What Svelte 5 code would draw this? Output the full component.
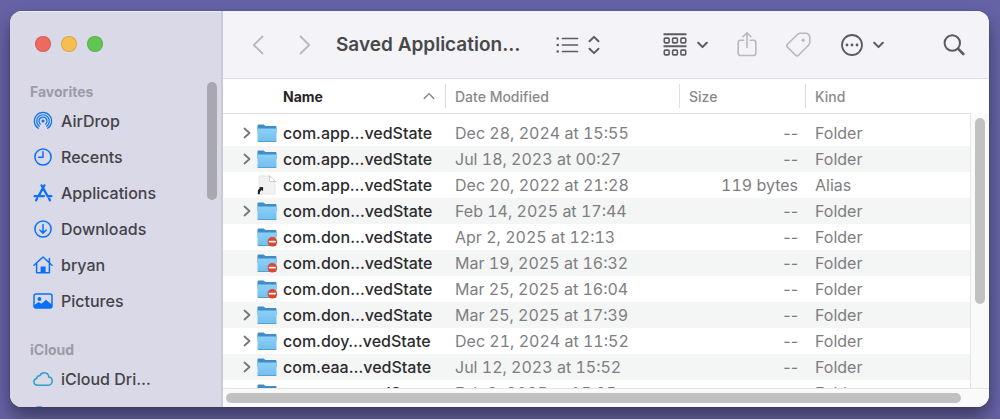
<script>
    const favorites = [
        { name: "AirDrop", icon: "airdrop" },
        { name: "Recents", icon: "clock" },
        { name: "Applications", icon: "apps" },
        { name: "Downloads", icon: "download" },
        { name: "bryan", icon: "home" },
        { name: "Pictures", icon: "picture" },
    ];

    const files = [
        { name: "com.app…vedState", date: "Dec 28, 2024 at 15:55", type: "folder" },
        { name: "com.app…vedState", date: "Jul 18, 2023 at 00:27", type: "folder" },
        { name: "com.app…vedState", date: "Dec 20, 2022 at 21:28", type: "alias", size: "119 bytes" },
        { name: "com.don…vedState", date: "Feb 14, 2025 at 17:44", type: "folder" },
        { name: "com.don…vedState", date: "Apr 2, 2025 at 12:13", type: "locked" },
        { name: "com.don…vedState", date: "Mar 19, 2025 at 16:32", type: "locked" },
        { name: "com.don…vedState", date: "Mar 25, 2025 at 16:04", type: "locked" },
        { name: "com.don…vedState", date: "Mar 25, 2025 at 17:39", type: "folder" },
        { name: "com.doy…vedState", date: "Dec 21, 2024 at 11:52", type: "folder" },
        { name: "com.eaa…vedState", date: "Jul 12, 2023 at 15:52", type: "folder" },
        { name: "com.exa…vedState", date: "Feb 9, 2025 at 15:05", type: "locked" },
    ];
</script>

{#snippet sideIcon(icon)}
    <svg class="side-icon" class:teal={icon === "cloud" || icon === "shared"} viewBox="0 0 20 20" aria-hidden="true">
        {#if icon === "airdrop"}
            <g stroke-width="1.2">
                <path d="M5.4 17.3a8.6 8.6 0 1 1 9.2 0" />
                <path d="M6.4 15.2a6.3 6.3 0 1 1 7.2 0" />
                <path d="M7.3 13a4 4 0 1 1 5.4 0" />
            </g>
            <circle class="solid" cx="10" cy="10" r="1.5" />
        {:else if icon === "clock"}
            <circle cx="10" cy="10" r="8.1" />
            <path d="M10 4.8V10.2H5.6" />
        {:else if icon === "apps"}
            <path stroke-width="2.2" d="M8.5 2.3 14.9 13.6M16 15.6l1 1.8M11.5 2.3 5.8 12.6M4.2 15.3 3 17.4M1.6 13.2h9.3M14.6 13.2h3.8" />
        {:else if icon === "download"}
            <circle cx="10" cy="10" r="8.1" />
            <path d="M10 5.4v8.6M6.8 11l3.2 3.2L13.2 11" />
        {:else if icon === "home"}
            <path d="M1 10.2 10 2l9 8.2M3.6 8.4v9.4h12.8V8.4M16.4 3.4v4" />
            <path class="solid" d="M7.6 11.6h5v6h-5z" />
        {:else if icon === "picture"}
            <rect x="1" y="3" width="18" height="14" rx="2" />
            <circle class="solid" cx="6.4" cy="8" r="1.9" />
            <path class="solid" d="M1 14.2 5.6 11l2.8 1.8L13 8.8l6 5V17H1z" />
        {:else if icon === "cloud"}
            <path d="M5 16.2C2.6 16.2.9 14.7.9 12.7c0-1.8 1.3-3 2.9-3.2-.1-1.7 1.3-3 3-2.7C7.7 4.8 9.3 3.7 11.3 3.8c2.5.1 4.3 1.9 4.5 4.3 2 .3 3.4 2 3.4 4 0 2.3-1.7 4.1-4 4.1z" />
        {:else}
            <path class="solid" d="M3 2.8a1.5 1.5 0 0 1 1.5-1.5h4l2 2h7v13H3z" />
        {/if}
    </svg>
{/snippet}

{#snippet fileIcon(type)}
    <svg class="file-icon" viewBox="0 0 20 20" aria-hidden="true">
        {#if type === "alias"}
            <path d="M2.5 1H13l5 5V19H2.5z" fill="#f2f2f3" stroke="#e4e4e5" stroke-width="1" />
            <path d="M12.5 1v5.5H18z" fill="#fff" stroke="#cfcfd0" stroke-width="1" />
            <path d="M.8 19.2V17c0-2 1-3.2 2.2-3.7L1.9 12.2 6.1 12v4.2l-1.2-1.1c-1.2.5-2 1.6-2.2 4.1z" fill="#222" />
        {:else}
            <path d="M.5 2.8c0-.8.5-1.3 1.3-1.3h4.8l1.8 1.5h9.9c.8 0 1.2.5 1.2 1.2V10H.5z" fill="#3f8cc9" />
            <path d="M.5 5.5h19v12c0 .7-.5 1.2-1.2 1.2H1.7c-.7 0-1.2-.5-1.2-1.2z" fill="url(#folder-front)" />
            <path d="M1 18.5h18" stroke="#5a9fcb" stroke-width="1" />
            {#if type === "locked"}
                <circle cx="15.3" cy="14.8" r="4.8" fill="#dc452e" />
                <path d="M12.5 14.6h5.6" stroke="#fff" stroke-width="1.8" />
            {/if}
        {/if}
    </svg>
{/snippet}

{#snippet down()}
    <svg width="11" height="8" viewBox="0 0 11 8" aria-hidden="true"><path stroke-width="2" d="M1.2 1.8 5.5 6.1 9.8 1.8" /></svg>
{/snippet}

<main>
    <div class="window">
        <aside>
            <div class="lights">
                <button class="close" aria-label="Close"></button>
                <button class="minimize" aria-label="Minimize"></button>
                <button class="zoom" aria-label="Zoom"></button>
            </div>
            <nav>
                <h2>Favorites</h2>
                {#each favorites as item}
                    <a href="#{item.icon}">{@render sideIcon(item.icon)}{item.name}</a>
                {/each}
                <h2>iCloud</h2>
                <a href="#cloud">{@render sideIcon("cloud")}iCloud Dri…</a>
                <a href="#shared" aria-label="Shared">{@render sideIcon("shared")}</a>
            </nav>
            <div class="side-thumb"></div>
        </aside>

        <section>
            <header>
                <button class="faded" aria-label="Back">
                    <svg width="12" height="20" viewBox="0 0 12 20"><path stroke-width="1.8" d="M10.5 1.5 1.8 10l8.7 8.5" /></svg>
                </button>
                <button class="faded forward" aria-label="Forward">
                    <svg width="12" height="20" viewBox="0 0 12 20"><path stroke-width="1.8" d="M1.5 1.5 10.2 10l-8.7 8.5" /></svg>
                </button>
                <h1>Saved Application…</h1>
                <button class="view" aria-label="View as list">
                    <svg width="24" height="20" viewBox="0 0 24 20">
                        <path stroke-width="1.7" d="M6.5 3.5h15M6.5 10h15M6.5 16.5h15" />
                        <path stroke-width="2.6" d="M1.7 3.5h.01M1.7 10h.01M1.7 16.5h.01" />
                    </svg>
                    <svg width="12" height="20" viewBox="0 0 12 20"><path stroke-width="2" d="M1.5 6.2 6 1.9l4.5 4.3M1.5 13.8 6 18.1l4.5-4.3" /></svg>
                </button>
                <button class="group" aria-label="Group">
                    <svg width="24" height="24" viewBox="0 0 24 24">
                        <path stroke-width="1.9" stroke-linecap="butt" d="M.5 1.2h23M.5 13.3h23" />
                        <g stroke-width="1.6">
                            <rect x="1.3" y="5.1" width="4.8" height="4.8" rx="1" />
                            <rect x="9.6" y="5.1" width="4.8" height="4.8" rx="1" />
                            <rect x="17.9" y="5.1" width="4.8" height="4.8" rx="1" />
                            <rect x="1.3" y="17.1" width="4.8" height="4.8" rx="1" />
                            <rect x="9.6" y="17.1" width="4.8" height="4.8" rx="1" />
                            <rect x="17.9" y="17.1" width="4.8" height="4.8" rx="1" />
                        </g>
                    </svg>
                    {@render down()}
                </button>
                <button class="faded" aria-label="Share">
                    <svg width="20" height="26" viewBox="0 0 20 26"><path stroke-width="1.6" d="M6.8 8.3H3.5a2.3 2.3 0 0 0-2.3 2.3v10.6a2.3 2.3 0 0 0 2.3 2.3h13a2.3 2.3 0 0 0 2.3-2.3V10.6a2.3 2.3 0 0 0-2.3-2.3h-3.3M10 15.5V1M6 4.7l4-4 4 4" /></svg>
                </button>
                <button class="faded" aria-label="Tags">
                    <svg width="26" height="26" viewBox="0 0 26 26">
                        <path stroke-width="1.6" d="M14.3 1.3h5.2c3.2 0 4.3 1.9 4.3 4.7v4.3c0 1.3-.5 2.2-1.3 3L12.5 23.3c-.9.9-1.9.9-2.8 0L1.4 15.1c-.9-.9-.9-1.9 0-2.8L11.5 2.5c.8-.8 1.6-1.2 2.8-1.2z" />
                        <circle cx="17.2" cy="8.2" r="1.6" fill="currentColor" stroke="none" />
                    </svg>
                </button>
                <button aria-label="More actions">
                    <svg width="22" height="22" viewBox="0 0 22 22">
                        <circle cx="11" cy="11" r="10" stroke-width="1.8" />
                        <path stroke-width="2.8" d="M6 11h.01M11 11h.01M16 11h.01" />
                    </svg>
                    {@render down()}
                </button>
                <button class="search" aria-label="Search">
                    <svg width="22" height="22" viewBox="0 0 22 22">
                        <circle cx="9.3" cy="9" r="7.7" stroke-width="2" />
                        <path stroke-width="2.6" d="M15.2 14.9 20.3 20" />
                    </svg>
                </button>
            </header>

            <div class="content">
                <div class="list">
                    <table>
                        <thead>
                            <tr>
                                <th class="name">
                                    <div>Name <svg width="12" height="8" viewBox="0 0 12 8"><path stroke-width="1.3" d="M1.2 6.5 6 1.6l4.8 4.9" /></svg></div>
                                </th>
                                <th class="date"><div>Date Modified</div></th>
                                <th class="size"><div>Size</div></th>
                                <th class="kind"><div>Kind</div></th>
                            </tr>
                        </thead>
                        <tbody>
                            {#each files as file}
                                <tr>
                                    <td>
                                        <div class="file">
                                            <span class="disclosure">
                                                {#if file.type === "folder"}
                                                    <button aria-label="Expand {file.name}">
                                                        <svg width="8" height="12" viewBox="0 0 8 12"><path stroke-width="1.8" d="M1.5 1.5 6.5 6l-5 4.5" /></svg>
                                                    </button>
                                                {/if}
                                            </span>
                                            {@render fileIcon(file.type)}
                                            <span>{file.name}</span>
                                        </div>
                                    </td>
                                    <td class="digits">{file.date}</td>
                                    <td class="num" class:digits={file.size}>{file.size ?? "--"}</td>
                                    <td>{file.type === "alias" ? "Alias" : "Folder"}</td>
                                </tr>
                            {/each}
                        </tbody>
                    </table>
                </div>
                <div class="v-track"><div class="thumb"></div></div>
                <div class="h-track"><div class="thumb"></div></div>
            </div>
        </section>
    </div>
</main>

<svg class="defs" aria-hidden="true">
    <linearGradient id="folder-front" x1="0" y1="0" x2="0" y2="1">
        <stop offset="0" stop-color="#8bd0f8" />
        <stop offset="1" stop-color="#75bfee" />
    </linearGradient>
</svg>

<style>
    :global(body) {
        background: #6563a6;
        font-family: Inter, "Liberation Sans", sans-serif;
    }

    main {
        box-sizing: border-box;
        height: 100vh;
        padding: 11px 11px 12px 10px;
        border-bottom: 1px solid #e4e4f2;
        overflow: hidden;
    }

    .window {
        height: 100%;
        display: grid;
        grid-template-columns: 213px 1fr;
        border-radius: 12px;
        overflow: hidden;
        background: #fff;
        box-shadow: 0 0 1px rgba(0, 0, 0, 0.6), 0 10px 18px rgba(0, 0, 0, 0.42);
    }

    button {
        border: 0;
        padding: 0;
        background: none;
        color: #5c5c5f;
        display: flex;
        align-items: center;
        gap: 10px;
    }

    svg {
        fill: none;
        stroke: currentColor;
        stroke-linecap: round;
        stroke-linejoin: round;
        flex-shrink: 0;
    }

    .defs {
        position: absolute;
        width: 0;
        height: 0;
    }

    /* sidebar */
    aside {
        position: relative;
        box-sizing: border-box;
        min-height: 0;
        overflow: hidden;
        padding: 25px 20px 0 20px;
        background: #dad9e7;
        border-right: 2px solid #cbcad9;
        box-shadow: inset 0 1px #eeedf5;
    }

    .lights {
        display: flex;
        gap: 10px;
        padding-left: 5px;
        margin-bottom: 29px;
    }

    .lights button {
        width: 16px;
        height: 16px;
        border-radius: 50%;
        box-shadow: inset 0 0 0 1px rgba(0, 0, 0, 0.12);
    }

    .close {
        background: #ed6a5e;
    }

    .minimize {
        background: #f5bf4f;
    }

    .zoom {
        background: #61c554;
    }

    h2 {
        margin: 0;
        font-size: 14px;
        line-height: 22px;
        font-weight: 700;
        color: #9c9ba8;
    }

    a + h2 {
        margin-top: 20px;
    }

    a {
        display: flex;
        align-items: center;
        gap: 8px;
        height: 36px;
        padding-left: 3px;
        font-size: 16px;
        font-weight: 500;
        color: #434347;
        text-decoration: none;
        white-space: nowrap;
    }

    .side-icon {
        width: 20px;
        height: 20px;
        color: #0a70f8;
        stroke-width: 1.5;
    }

    .side-icon.teal {
        color: #2f9fc4;
    }

    .solid {
        fill: currentColor;
        stroke: none;
    }

    .side-thumb {
        position: absolute;
        top: 71px;
        right: 4px;
        width: 10px;
        height: 118px;
        border-radius: 5px;
        background: #a8a7b2;
    }

    /* toolbar */
    section {
        min-width: 0;
        min-height: 0;
        display: flex;
        flex-direction: column;
    }

    header {
        display: flex;
        align-items: center;
        gap: 29px;
        height: 67px;
        flex-shrink: 0;
        padding: 0 24px 0 29px;
        background: #f4f3f8;
        border-bottom: 1px solid #dddde0;
    }

    .faded {
        color: #b9b9bc;
    }

    .forward {
        margin-left: 6px;
    }

    h1 {
        flex: 1;
        margin: 0 0 0 -4px;
        font-size: 19px;
        font-weight: 600;
        color: #48484b;
        white-space: nowrap;
    }

    .view {
        gap: 8px;
    }

    .group {
        margin-left: 34px;
    }

    .search {
        margin-left: 30px;
    }

    /* file list */
    .content {
        flex: 1;
        min-height: 0;
        display: grid;
        grid-template-columns: 1fr 19px;
        grid-template-rows: 1fr 19px;
    }

    .list {
        min-height: 0;
        overflow: hidden;
    }

    table {
        width: 100%;
        table-layout: fixed;
        border-collapse: separate;
        border-spacing: 0;
        font-size: 16px;
        color: #7e7e81;
    }

    th {
        height: 34px;
        padding: 0;
        border-bottom: 1px solid #dfdfe0;
        font-size: 14px;
        font-weight: 500;
        color: #89898c;
        text-align: left;
    }

    th div {
        display: flex;
        align-items: center;
        justify-content: space-between;
        height: 24px;
        padding-left: 9px;
        border-left: 1px solid #dedee0;
    }

    .name {
        width: 222px;
        font-weight: 700;
        color: #262628;
    }

    .name div {
        padding: 0 10px 0 60px;
        border-left: 0;
    }

    .name svg {
        color: #7c7c80;
    }

    .date {
        width: 234px;
    }

    .size {
        width: 126px;
    }

    tbody::before {
        content: "";
        display: block;
        height: 6px;
    }

    td {
        height: 26px;
        padding: 0 0 0 10px;
        line-height: 26px;
        white-space: nowrap;
    }

    tbody tr:nth-child(even) {
        background: #f4f5f5;
    }

    td:first-child {
        padding-left: 18px;
        font-weight: 500;
        color: #2c2c2e;
    }

    .digits {
        font-variant-numeric: tabular-nums;
    }

    .num {
        padding: 0 7px 0 0;
        text-align: right;
    }

    .file {
        display: flex;
        align-items: center;
    }

    .disclosure {
        width: 16px;
    }

    .disclosure button {
        padding-left: 2px;
        color: #77777a;
    }

    .file-icon {
        width: 20px;
        height: 20px;
        margin-right: 6px;
        stroke: none;
    }

    .v-track {
        margin-top: 34px;
        padding: 5px 4px;
        background: #fafafa;
        border-left: 1px solid #e5e5e5;
    }

    .h-track {
        grid-column: 1 / -1;
        padding: 4px 28px 4px 3px;
        background: #fafafa;
        border-top: 1px solid #e5e5e5;
    }

    .thumb {
        border-radius: 5px;
        background: #c1c1c1;
    }

    .v-track .thumb {
        height: 70%;
    }

    .h-track .thumb {
        height: 10px;
    }
</style>
